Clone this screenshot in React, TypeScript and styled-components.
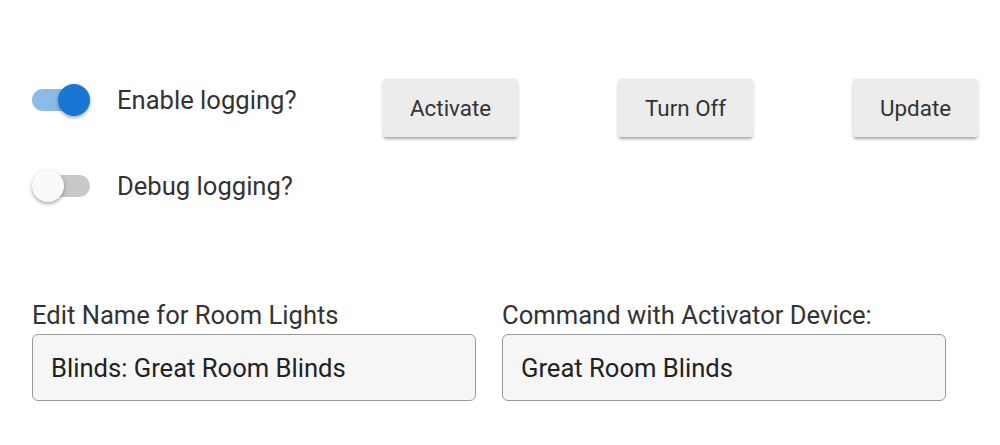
import styled, { createGlobalStyle } from "styled-components";

const GlobalStyle = createGlobalStyle`
  body {
    margin: 0;
    background: #fff;
    font-family: Roboto, "Liberation Sans", sans-serif;
    color: #333;
  }
`;

const Page = styled.div`
  width: 1000px;
  height: 445px;
  overflow: hidden;
  padding-left: 32px;
  box-sizing: border-box;
`;

const TopSection = styled.div`
  display: flex;
  align-items: flex-start;
  padding-top: 79px;
`;

const ToggleColumn = styled.div`
  width: 351px;
  flex: none;
  display: flex;
  flex-direction: column;
  gap: 54px;
  padding-top: 5px;
`;

const ToggleRow = styled.label`
  display: flex;
  align-items: center;
  gap: 27px;
  height: 32px;
  font-size: 25.6px;
  color: #333;
`;

type SwitchProps = { on: boolean };

const SwitchTrack = styled.span<SwitchProps>`
  position: relative;
  display: inline-block;
  width: 58px;
  height: 32px;
  flex: none;

  &::before {
    content: "";
    position: absolute;
    left: ${({ on }) => (on ? "0" : "16px")};
    right: ${({ on }) => (on ? "2px" : "0")};
    top: 5px;
    height: 22px;
    border-radius: 11px;
    background: ${({ on }) => (on ? "#8dbbe8" : "#c9c9c9")};
  }

  &::after {
    content: "";
    position: absolute;
    top: 0;
    left: ${({ on }) => (on ? "26px" : "0")};
    width: 32px;
    height: 32px;
    border-radius: 50%;
    background: ${({ on }) => (on ? "#1976d2" : "#fafafa")};
    box-shadow: 0 2px 3px rgba(0, 0, 0, 0.25), 0 1px 6px rgba(0, 0, 0, 0.12);
  }
`;

const ButtonCell = styled.div`
  width: 235px;
  flex: none;
`;

const ActionButton = styled.button`
  height: 58px;
  padding: 0 27px;
  border: none;
  border-radius: 3px;
  background: #ececec;
  color: #333;
  font-family: Roboto, "Liberation Sans", sans-serif;
  font-size: 22.4px;
  box-shadow: 0 3px 3px -1px rgba(0, 0, 0, 0.3), 0 1px 4px rgba(0, 0, 0, 0.1);
  cursor: pointer;
`;

const FieldRow = styled.div`
  display: flex;
  gap: 26px;
  margin-top: 98px;
`;

const Field = styled.div`
  display: flex;
  flex-direction: column;
  width: 444px;
`;

const FieldLabel = styled.label`
  font-size: 25.6px;
  line-height: 30px;
  color: #333;
  margin-bottom: 4px;
`;

const TextInput = styled.input`
  height: 67px;
  box-sizing: border-box;
  padding: 0 18px;
  border: 1px solid #9a9a9a;
  border-radius: 6px;
  background: #f6f6f6;
  color: #222;
  font-family: Roboto, "Liberation Sans", sans-serif;
  font-size: 25.6px;
  outline: none;
`;

const App = () => {
  return (
    <Page>
      <GlobalStyle />
      <TopSection>
        <ToggleColumn>
          <ToggleRow>
            <SwitchTrack on={true} />
            Enable logging?
          </ToggleRow>
          <ToggleRow>
            <SwitchTrack on={false} />
            Debug logging?
          </ToggleRow>
        </ToggleColumn>
        <ButtonCell>
          <ActionButton>Activate</ActionButton>
        </ButtonCell>
        <ButtonCell>
          <ActionButton>Turn Off</ActionButton>
        </ButtonCell>
        <ButtonCell>
          <ActionButton>Update</ActionButton>
        </ButtonCell>
      </TopSection>
      <FieldRow>
        <Field>
          <FieldLabel>Edit Name for Room Lights</FieldLabel>
          <TextInput defaultValue="Blinds: Great Room Blinds" />
        </Field>
        <Field>
          <FieldLabel>Command with Activator Device:</FieldLabel>
          <TextInput defaultValue="Great Room Blinds" />
        </Field>
      </FieldRow>
    </Page>
  );
};

export default App;
